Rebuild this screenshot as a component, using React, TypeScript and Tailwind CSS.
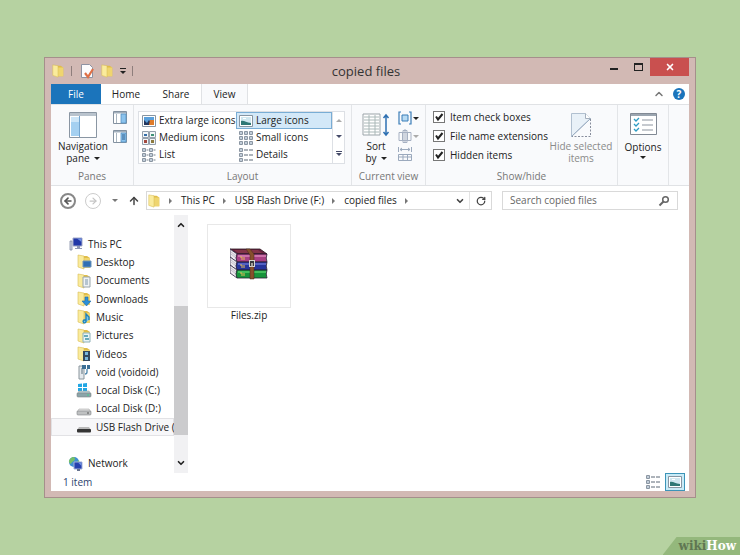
import type { ReactNode } from "react";
import { ArrowLeft, ArrowRight, ArrowUp, ChevronDown, ChevronUp, RotateCw, X } from "lucide-react";

const folderOverlays: Record<string, ReactNode> = {
  Desktop: <path d="M7 7h8v6H7z" fill="#2f6fb4" stroke="#6c93b8" />,
  Documents: (
    <>
      <path d="M7 4h7v10H7z" fill="#eef2f4" stroke="#9aa6ac" />
      <path d="M9 7h3M9 9h3M9 11h3" stroke="#7d97ad" />
    </>
  ),
  Downloads: <path d="M9 6h3v4h3l-4.500 5L6 10h3z" fill="#2c8fd6" stroke="#1c6ba8" strokeWidth="0.6" />,
  Music: <path d="M10 13V5l3 3v3M10 13a1.500 1.500 0 1 1-2-2h2" fill="#7cc6ea" stroke="#1f83bb" strokeWidth="1.400" />,
  Pictures: (
    <>
      <path d="M7 5h7v9H7z" fill="#e9f4f6" stroke="#8db0b8" />
      <path d="M8 8h4M9 11h4" stroke="#3d93a8" strokeWidth="1.500" />
    </>
  ),
  Videos: (
    <>
      <path d="M7 5h7v10H7z" fill="#34495e" />
      <path d="M9 6h3v3H9zM9 11h3v3H9z" fill="#79b7dd" />
    </>
  ),
};

function FolderIcon({ name = "", className = "h-4 w-4" }: { name?: string; className?: string }) {
  return (
    <svg viewBox="0 0 16 16" className={className} aria-hidden="true">
      <path d="M7 2h4l3 2v10H7z" fill="#e0bd48" />
      <path d="M8 4h6v10H8z" fill="#efd56f" />
      <path d="M2 1l6 1v13l-6-2z" fill="#faeb9c" stroke="#d8bc55" strokeWidth="0.600" />
      {folderOverlays[name]}
    </svg>
  );
}

function DriveIcon({ kind }: { kind: string }) {
  return (
    <svg viewBox="0 0 16 16" className="h-4 w-4" aria-hidden="true">
      {kind === "windows" && <path d="M2 1l4-.5V4H2zM7 .4L11 0v4H7zM2 5h4v3.500L2 8zM7 5h4v4l-4-.5z" fill="#22a7e4" />}
      {kind === "usb" ? (
        <>
          <path d="M3 8h10l2 3H1z" fill="#b9b9b9" />
          <rect x="1" y="10" width="14" height="3.500" rx="1" fill="#353535" />
        </>
      ) : (
        <>
          <path d="M3 8h10l2 3H1z" fill={kind === "windows" ? "#b8ced1" : "#e2e2e2"} stroke="#999" strokeWidth="0.500" />
          <rect x="1" y="10" width="14" height="4" rx="1" fill={kind === "windows" ? "#8ba4a9" : "#bfc1c2"} stroke="#808486" strokeWidth="0.600" />
          <path d="M11 12h2" stroke={kind === "windows" ? "#3fd08a" : "#555"} />
        </>
      )}
    </svg>
  );
}

function ComputerIcon() {
  return (
    <svg viewBox="0 0 16 16" className="h-4 w-4" aria-hidden="true">
      <path d="M2 5h2v9H2z" fill="#d3d7e4" stroke="#828aa5" strokeWidth="0.800" />
      <path d="M5 2h9v8H5z" fill="#2238a8" stroke="#a1a8c8" />
      <path d="M9 2.500h4.500V6z" fill="#7190e0" />
      <path d="M9 10h3v2h2v1H7v-1h2z" fill="#8f98b5" />
    </svg>
  );
}

function NetworkIcon() {
  return (
    <svg viewBox="0 0 16 16" className="h-4 w-4" aria-hidden="true">
      <circle cx="6" cy="6" r="5" fill="#3e8fd2" />
      <path d="M2 3c3-3 5-2 5 0S4 5 3 8C1 7 0 5 2 3zM8 7l3-3 .5 3-3 3z" fill="#75bf6a" />
      <path d="M6 6h8v7H6z" fill="#2540ae" stroke="#a3afd8" />
      <path d="M10 6.500h3.500V10z" fill="#6f8fe0" />
      <path d="M9 13h3v2H9z" fill="#68748f" />
    </svg>
  );
}

function PhoneIcon() {
  return (
    <svg viewBox="0 0 16 16" className="h-4 w-4" aria-hidden="true">
      <path d="M3 2h5v13H3z" fill="#e4e9ed" stroke="#8a959c" />
      <path d="M5 5h2M5 7h2M5 9h2" stroke="#5d737f" />
      <path d="M6 1h4v4H6zM11 1h3v4h-3z" fill="#3b6f95" />
      <path d="M11 5v3a2 2 0 0 1-2 2" fill="none" stroke="#4c86ad" strokeWidth="1.300" />
    </svg>
  );
}

function LayoutIcon({ kind }: { kind: string }) {
  if (kind === "xlarge" || kind === "large") {
    return (
      <svg viewBox="0 0 14 14" className="h-3.5 w-3.5 shrink-0" aria-hidden="true">
        <path d="M.5 1.500h13v11H.5z" fill="#fff" stroke="#8795a2" />
        <path d="M2 3h10v8H2z" fill={kind === "large" ? "#cfe6ef" : "#5aa0dc"} />
        <path d={kind === "large" ? "M2 11V7c3-1 5 2 10 2v2z" : "M2 11V6l3 3 2-3 2 3v2z"} fill={kind === "large" ? "#2f7775" : "#23375e"} />
        {kind === "xlarge" && <path d="M8 6h4v5H7z" fill="#df7b2a" />}
        {kind === "large" && <path d="M4 4h3v1H4z" fill="#fff" />}
      </svg>
    );
  }
  if (kind === "medium") {
    return (
      <svg viewBox="0 0 14 14" className="h-3.5 w-3.5 shrink-0" aria-hidden="true">
        <path d="M.5.5h6v6h-6zM7.500.5h6v6h-6zM.5 7.500h6v6h-6zM7.500 7.500h6v6h-6z" fill="#f2f6f8" stroke="#95a0ac" />
        <path d="M2 3h3v2H2z" fill="#356ea8" />
        <path d="M9 3h3v2H9z" fill="#3f9176" />
        <path d="M2 9h3v3H2z" fill="#a3493f" />
        <path d="M9 9h3v3H9z" fill="#8d7a3f" />
      </svg>
    );
  }
  const columns = kind === "small" ? [0.5, 5.5, 10.5] : kind === "list" ? [0.5, 7.5] : [0.5];
  return (
    <svg viewBox="0 0 14 14" className="h-3.5 w-3.5 shrink-0" fill="none" aria-hidden="true">
      {columns.map((x) => (
        <g key={x}>
          <path d={`M${x} .5h3v3h-3zM${x} 5.500h3v3h-3zM${x} 10.500h3v3h-3z`} fill="#e6eaee" stroke="#8b96a2" />
          <path d={`M${x + 1} 2h1M${x + 1} 7h1M${x + 1} 12h1`} stroke="#56779a" />
          {kind === "list" && <path d={`M${x + 4} 2h2M${x + 4} 7h2M${x + 4} 12h2`} stroke="#79838f" />}
        </g>
      ))}
      {kind === "details" && <path d="M5 2h4M10 2h4M5 7h4M10 7h4M5 12h4M10 12h4" stroke="#5d6976" />}
    </svg>
  );
}

function PaneIcon({ side = "right" }: { side?: string }) {
  if (side === "left") {
    return (
      <svg viewBox="0 0 28 26" className="h-[26px] w-7" aria-hidden="true">
        <path d="M.5.5h27v25H.5z" fill="#fff" stroke="#8a96a3" />
        <path d="M1 1h26v3H1z" fill="#b9c3cd" />
        <path d="M2 5h8v19H2z" fill="#a4d0f1" />
        <path d="M10.500 4v21" stroke="#74a5cf" />
        <path d="M2 5h8v5H2z" fill="#cde6f8" />
      </svg>
    );
  }
  return (
    <svg viewBox="0 0 14 13" className="h-[13px] w-3.5" aria-hidden="true">
      <path d="M.5.5h13v12H.5z" fill="#fff" stroke="#8391a0" />
      <path d="M1 1h12v1.500H1z" fill="#a2afbc" />
      <path d="M8 3h5v9H8z" fill="#8cc3ed" stroke="#5792c4" strokeWidth="0.800" />
      <path d="M3.500 3v9" stroke="#a9b5c0" />
      {side === "details" && <path d="M9 5h3M9 7h3M9 9h3" stroke="#315f8d" />}
    </svg>
  );
}

function Caret({ className = "border-t-[#222]" }: { className?: string }) {
  return <span className={`inline-block h-0 w-0 border-x-[3px] border-t-[3px] border-x-transparent ${className}`} />;
}

function SmallRibbonIcons() {
  return (
    <div className="flex flex-col gap-1">
      <button aria-label="Group by" className="flex items-center gap-px">
        <svg viewBox="0 0 14 14" className="h-3.5 w-3.5" fill="none" stroke="#397cb7" aria-hidden="true">
          <path d="M3 1H1v12h2M11 1h2v12h-2" strokeWidth="1.200" />
          <path d="M4 4h6v6H4z" fill="#b8dbf3" />
        </svg>
        <Caret />
      </button>
      <button aria-label="Add columns" className="flex items-center gap-px">
        <svg viewBox="0 0 14 14" className="h-3.5 w-3.5" fill="none" stroke="#a6b0c2" aria-hidden="true">
          <path d="M1 3.500h12v8H1zM4.500 4v7M9.500 4v7M5 1.500h4v12H5zM7 0v14" />
        </svg>
        <Caret className="border-t-[#aaa]" />
      </button>
      <button aria-label="Size all columns to fit">
        <svg viewBox="0 0 14 14" className="h-3.5 w-3.5" fill="none" stroke="#9ba9bd" aria-hidden="true">
          <path d="M.5 0v5M13.500 0v5M2 2.500h10M4 1L2 2.500 4 4M10 1l2 1.500L10 4M.5 7.500h13v6H.5zM.5 10h13M5 7v6M9.500 7v6" />
        </svg>
      </button>
    </div>
  );
}

function ArchiveIcon() {
  const books = [
    { y: 6, cover: "#a83f83", light: "#d884b6" },
    { y: 14, cover: "#26349b", light: "#6472d1" },
    { y: 22, cover: "#17943b", light: "#53cc69" },
  ];
  return (
    <svg viewBox="0 0 38 32" className="h-8 w-[38px]" aria-hidden="true">
      <path d="M0 1h30l7 5H7z" fill="#67233e" stroke="#2c1420" strokeWidth="0.800" />
      <path d="M4 2h24l4 3H8z" fill="#843449" />
      {books.map((book) => (
        <g key={book.y}>
          <path d={`M0 ${book.y - 5}l7 5v8l-7-5z`} fill="#ece8ee" stroke="#352d46" strokeWidth="0.800" />
          <path d={`M1 ${book.y - 2}l5 4M1 ${book.y}l5 4`} stroke="#aaa6b2" strokeWidth="0.600" />
          <path d={`M7 ${book.y}h30q-1.500 4 0 8H7q-2-4 0-8z`} fill={book.cover} stroke="#292035" strokeWidth="0.800" />
          <path d={`M8 ${book.y + 2}h28`} stroke={book.light} strokeWidth="1.500" />
          <path d={`M10 ${book.y + 3}h2v3M14 ${book.y + 3}v3`} stroke="#e5bd5c" fill="none" />
        </g>
      ))}
      <path d="M16 1h4l4 5v25h-4V7z" fill="#87502c" stroke="#442a1b" strokeWidth="0.500" />
      <rect x="19.500" y="12.500" width="5" height="6" fill="#383b3d" stroke="#d7d6cf" />
      <path d="M22 15v4" stroke="#c8c4b8" strokeWidth="1.500" />
    </svg>
  );
}

const layouts = [
  ["Extra large icons", "xlarge"],
  ["Large icons", "large"],
  ["Medium icons", "medium"],
  ["Small icons", "small"],
  ["List", "list"],
  ["Details", "details"],
];

const places: { label: string; icon: ReactNode }[] = [
  ...["Desktop", "Documents", "Downloads", "Music", "Pictures", "Videos"].map((label) => ({
    label,
    icon: <FolderIcon name={label} />,
  })),
  { label: "void (voidoid)", icon: <PhoneIcon /> },
  { label: "Local Disk (C:)", icon: <DriveIcon kind="windows" /> },
  { label: "Local Disk (D:)", icon: <DriveIcon kind="disk" /> },
  { label: "USB Flash Drive (", icon: <DriveIcon kind="usb" /> },
];

function Group({ title, className = "", children }: { title: string; className?: string; children?: ReactNode }) {
  return (
    <section className={`flex shrink-0 flex-col border-r border-[#e3e5e8] ${className}`}>
      <div className="flex flex-1 items-start">{children}</div>
      {title && <h2 className="h-[15px] text-center leading-3 text-[#777]">{title}</h2>}
    </section>
  );
}

function TitleBar() {
  return (
    <header className="flex h-[26px] shrink-0">
      <div className="flex w-[84px] items-center gap-1.5">
        <FolderIcon className="h-3.5 w-3.5" />
        <span className="h-2.5 w-px bg-[#8e7e7c]" />
        <button aria-label="Properties" className="ml-0.5">
          <svg viewBox="0 0 14 16" className="h-4 w-3.5" aria-hidden="true">
            <path d="M1.500 1.500h8l3 3v10h-11z" fill="#fcfcfd" stroke="#8e93a3" />
            <path d="M5 10l3 4 5-8" fill="none" stroke="#df7046" strokeWidth="2.200" />
          </svg>
        </button>
        <button aria-label="New folder">
          <FolderIcon className="h-3.5 w-3.5" />
        </button>
        <button aria-label="Customize toolbar" className="flex flex-col items-center gap-0.5">
          <span className="h-px w-1.5 bg-[#222]" />
          <Caret />
        </button>
        <span className="h-2.5 w-px bg-[#8e7e7c]" />
      </div>
      <h1 className="flex-1 text-center text-[13px] leading-[26px] text-[#333]">copied files</h1>
      <div className="flex w-[92px] items-start justify-end">
        <button aria-label="Minimize" className="flex h-[18px] w-6 items-center justify-center pt-1">
          <span className="h-0.5 w-2 bg-[#222]" />
        </button>
        <button aria-label="Maximize" className="flex h-[18px] w-6 items-center justify-center">
          <span className="h-2 w-[9px] border border-t-2 border-[#222]" />
        </button>
        <button aria-label="Close" className="flex h-[18px] w-[39px] items-center justify-center bg-[#c9504f] text-white">
          <X className="h-2.5 w-2.5" strokeWidth={4} />
        </button>
      </div>
    </header>
  );
}

function Ribbon() {
  return (
    <div className="flex h-[82px] shrink-0 border-y border-[#e0e2e5] bg-[#f9fafc]">
      <Group title="Panes" className="w-[83px]">
        <button className="ml-[7px] mt-[7px] flex flex-col items-center">
          <PaneIcon side="left" />
          <span className="mt-0.5 flex flex-col items-center leading-3">
            <span className="h-3">Navigation</span>
            <span className="flex h-3 items-center gap-1">pane <Caret /></span>
          </span>
        </button>
        <div className="mt-1.5 ml-[5px] flex flex-col gap-1.5">
          <button aria-label="Preview pane"><PaneIcon /></button>
          <button aria-label="Details pane"><PaneIcon side="details" /></button>
        </div>
      </Group>
      <Group title="Layout" className="w-[218px]">
        <div className="mt-1.5 ml-1 flex h-[53px] w-[207px] border border-[#dde0e5] bg-white">
          <div className="grid flex-1 grid-cols-[97px_1fr] grid-rows-3">
            {layouts.map(([label, kind]) => (
              <button
                key={kind}
                className={
                  kind === "large"
                    ? "flex items-center gap-[3px] bg-[#d3e8f8] pl-[3px] whitespace-nowrap ring-1 ring-[#79add5] ring-inset"
                    : "flex items-center gap-[3px] pl-[3px] whitespace-nowrap"
                }
              >
                <LayoutIcon kind={kind} />
                {label}
              </button>
            ))}
          </div>
          <div className="flex w-3 flex-col items-center justify-around border-l border-[#dde0e5]">
            <button aria-label="Scroll up" className="flex"><Caret className="rotate-180 border-t-[#aaa]" /></button>
            <button aria-label="Scroll down" className="flex"><Caret className="border-t-[#444a68]" /></button>
            <button aria-label="More layouts" className="flex flex-col items-center gap-px">
              <span className="h-px w-1.5 bg-[#444a68]" />
              <Caret className="border-t-[#444a68]" />
            </button>
          </div>
        </div>
      </Group>
      <Group title="Current view" className="w-[74px]">
        <button className="mt-2 ml-2.5 flex flex-col items-center">
          <svg viewBox="0 0 28 24" className="h-6 w-7" fill="none" aria-hidden="true">
            <path d="M1 1h17v21H1z" fill="#fff" stroke="#9ba4a9" />
            <path d="M2 4h15M2 7h15M2 10h15M2 13h15M2 16h15M2 19h15M7 2v20M13 2v20" stroke="#aab8b8" />
            <path d="M24 2v20M21.500 5L24 2l2.500 3M21.500 19l2.500 3 2.500-3" stroke="#2e70b2" strokeWidth="1.500" />
          </svg>
          <span className="mt-[3px] flex flex-col items-center leading-3">
            <span className="h-3">Sort</span>
            <span className="flex h-3 items-center gap-1">by <Caret /></span>
          </span>
        </button>
        <div className="mt-1.5 ml-2"><SmallRibbonIcons /></div>
      </Group>
      <Group title="Show/hide" className="w-48">
        <div className="mt-1.5 ml-[7px] flex w-[112px] flex-col gap-[7px]">
          {["Item check boxes", "File name extensions", "Hidden items"].map((label) => (
            <label key={label} className="flex h-3 items-center gap-[5px] whitespace-nowrap">
              <span className="grid h-3 w-3 place-items-center">
                <input type="checkbox" defaultChecked className="col-start-1 row-start-1 h-3 w-3 appearance-none border border-[#777] bg-white" />
                <svg viewBox="0 0 12 12" className="pointer-events-none col-start-1 row-start-1 h-3 w-3" aria-hidden="true">
                  <path d="M3 5.500l2 3L9.500 3" fill="none" stroke="#222" strokeWidth="2" />
                </svg>
              </span>
              {label}
            </label>
          ))}
        </div>
        <button disabled className="mt-2 flex flex-1 flex-col items-center whitespace-nowrap text-[#8a8a8a]">
          <svg viewBox="0 0 20 24" className="h-6 w-5" fill="none" aria-hidden="true">
            <path d="M.5.5h14l5 5L.5 23.500z" fill="#e9f1f8" stroke="#b1c0d0" />
            <path d="M14.500.5v5h5" fill="#fff" stroke="#a4afbd" />
            <path d="M19.500 6v17.500H1" stroke="#878d9c" strokeDasharray="2 1.500" />
            <path d="M.5 23.500l19-18" stroke="#9aacc1" />
          </svg>
          <span className="mt-[3px] flex flex-col items-center leading-3">
            <span className="h-3">Hide selected</span>
            <span className="h-3">items</span>
          </span>
        </button>
      </Group>
      <Group title="" className="w-[51px]">
        <button className="mt-2 flex flex-1 flex-col items-center">
          <svg viewBox="0 0 27 22" className="h-[22px] w-[27px]" fill="none" aria-hidden="true">
            <path d="M.5.5h26v21H.5z" fill="#fff" stroke="#818994" />
            <path d="M1 1h25v2H1z" fill="#9ba5b0" />
            <path d="M4 6l2 2 3-3M4 11l2 2 3-3M4 16l2 2 3-3" stroke="#2d9cc4" strokeWidth="1.300" />
            <path d="M12 7h11M12 12h11M12 17h11" stroke="#8d95a0" />
          </svg>
          <span className="mt-[5px] leading-[14px]">Options</span>
          <Caret className="mt-0.5 border-t-[#222]" />
        </button>
      </Group>
    </div>
  );
}

function AddressRow() {
  return (
    <div className="flex h-[29px] shrink-0 items-center pr-[11px] pl-[9px] text-[#444]">
      <button aria-label="Back" className="grid h-4 w-4 place-items-center rounded-full border-2 border-[#888] text-[#555]">
        <ArrowLeft className="h-2.5 w-2.5" strokeWidth={4} />
      </button>
      <button aria-label="Forward" className="ml-[9px] grid h-4 w-4 place-items-center rounded-full border border-[#ccc] text-[#c4c4c4]">
        <ArrowRight className="h-2.5 w-2.5" strokeWidth={3} />
      </button>
      <button aria-label="Recent locations" className="ml-[11px] flex"><Caret className="border-t-[#777]" /></button>
      <button aria-label="Up" className="ml-[10px]"><ArrowUp className="h-3 w-3" strokeWidth={3} /></button>
      <div className="ml-1.5 flex h-[19px] flex-1 items-center border border-[#d9d9d9] bg-white">
        <FolderIcon className="h-3.5 w-3.5" />
        <nav aria-label="Address" className="flex flex-1 items-center">
          {["This PC", "USB Flash Drive (F:)", "copied files"].map((crumb) => (
            <span key={crumb} className="flex items-center">
              <span className="mr-[9px] ml-2 h-0 w-0 border-y-[3px] border-l-[3px] border-y-transparent border-l-[#777]" />
              <a href="#" className="text-[#222]">{crumb}</a>
            </span>
          ))}
          <span className="mx-2 h-0 w-0 border-y-[3px] border-l-[3px] border-y-transparent border-l-[#777]" />
        </nav>
        <button aria-label="Previous locations" className="px-1"><ChevronDown className="h-2.5 w-2.5" strokeWidth={4} /></button>
        <button aria-label="Refresh" className="flex h-full w-[22px] items-center justify-center border-l border-[#e3e3e3]">
          <RotateCw className="h-2.5 w-2.5" strokeWidth={3} />
        </button>
      </div>
      <div className="ml-2.5 flex h-[19px] w-44 items-center border border-[#d9d9d9] bg-white px-[7px]">
        <input type="search" aria-label="Search copied files" placeholder="Search copied files" className="min-w-0 flex-1 outline-none placeholder:text-[#666]" />
        <svg viewBox="0 0 12 12" className="h-3 w-3" fill="none" stroke="#666" aria-hidden="true">
          <circle cx="7.500" cy="4.500" r="2.800" strokeWidth="1.500" />
          <path d="M5.500 6.500L1.500 10.500" strokeWidth="2" />
        </svg>
      </div>
    </div>
  );
}

export default function App() {
  return (
    <div className="relative flex min-h-screen flex-col overflow-hidden bg-[#b6d2a1] px-11 py-[57px] font-['Open_Sans','Liberation_Sans',sans-serif] text-[10px] text-[#222]">
      <main className="flex flex-1 flex-col border border-[#a58f8b] bg-[#d2b9b4] px-1.5 pb-1.5">
        <TitleBar />
        <div className="flex flex-1 flex-col bg-white">
          <div className="flex h-5 shrink-0">
            <button className="w-[50px] bg-[#1b74bb] text-white">File</button>
            <button className="w-[50px]">Home</button>
            <button className="w-[50px]">Share</button>
            <button className="w-[47px] border-x border-[#e0e2e5] bg-[#f9fafc]">View</button>
            <div className="flex flex-1 items-center justify-end gap-2 pr-1">
              <button aria-label="Minimize the ribbon"><ChevronUp className="h-3 w-3 text-[#777]" strokeWidth={3} /></button>
              <button aria-label="Help" className="h-3 w-3 rounded-full bg-[#1b74bb] font-bold leading-3 text-white">?</button>
            </div>
          </div>
          <Ribbon />
          <AddressRow />
          <div className="flex flex-1">
            <aside className="flex w-[137px] shrink-0">
              <ul className="flex min-w-0 flex-1 flex-col pt-5">
                <li className="flex flex-1 items-center gap-1 pl-[17px]"><ComputerIcon />This PC</li>
                {places.map(({ label, icon }) => (
                  <li
                    key={label}
                    className={
                      label.startsWith("USB")
                        ? "flex flex-1 items-center gap-1 bg-[#f7f7f9] pl-[25px] whitespace-nowrap ring-1 ring-[#e2e2e5] ring-inset"
                        : "flex flex-1 items-center gap-1 pl-[25px] whitespace-nowrap"
                    }
                  >
                    <span className="shrink-0">{icon}</span>
                    {label}
                  </li>
                ))}
                <li className="flex-1" aria-hidden="true" />
                <li className="flex flex-1 items-center gap-1 pl-[17px]"><NetworkIcon />Network</li>
              </ul>
              <div className="flex w-3.5 shrink-0 flex-col items-center bg-[#f1f1f3]">
                <button aria-label="Scroll up" className="flex h-5 items-center"><ChevronUp className="h-2.5 w-2.5" strokeWidth={4} /></button>
                <div className="flex-[71]" />
                <div className="w-full flex-[129] bg-[#cbcbcd]" />
                <div className="flex-[18]" />
                <button aria-label="Scroll down" className="flex h-5 items-center"><ChevronDown className="h-2.5 w-2.5" strokeWidth={4} /></button>
              </div>
            </aside>
            <section aria-label="Files" className="flex-1 pt-[9px] pl-[19px]">
              <figure className="w-[84px] text-center">
                <div className="flex h-[84px] items-center justify-center border border-[#e8e8e8] pb-1"><ArchiveIcon /></div>
                <figcaption className="leading-[14px]">Files.zip</figcaption>
              </figure>
            </section>
          </div>
          <footer className="flex h-[18px] shrink-0 items-center justify-between pr-1 pl-3 text-[#2c3f6e]">
            <span>1 item</span>
            <div className="flex items-center gap-1">
              <button aria-label="Details view" className="p-px"><LayoutIcon kind="details" /></button>
              <button aria-label="Large icons view" className="border border-[#3c94b8] bg-[#c9ebf7] px-0.5 py-px"><LayoutIcon kind="large" /></button>
            </div>
          </footer>
        </div>
      </main>
      <div className="absolute right-0 bottom-0 flex h-[18px] items-center bg-[#94b87c] pr-1 pl-4 font-['DejaVu_Serif',serif] text-[12px] font-bold [clip-path:polygon(14px_0,100%_0,100%_100%,0_100%)]">
        <span className="text-[#5f7652]">wiki</span>
        <span className="text-white">How</span>
      </div>
    </div>
  );
}
